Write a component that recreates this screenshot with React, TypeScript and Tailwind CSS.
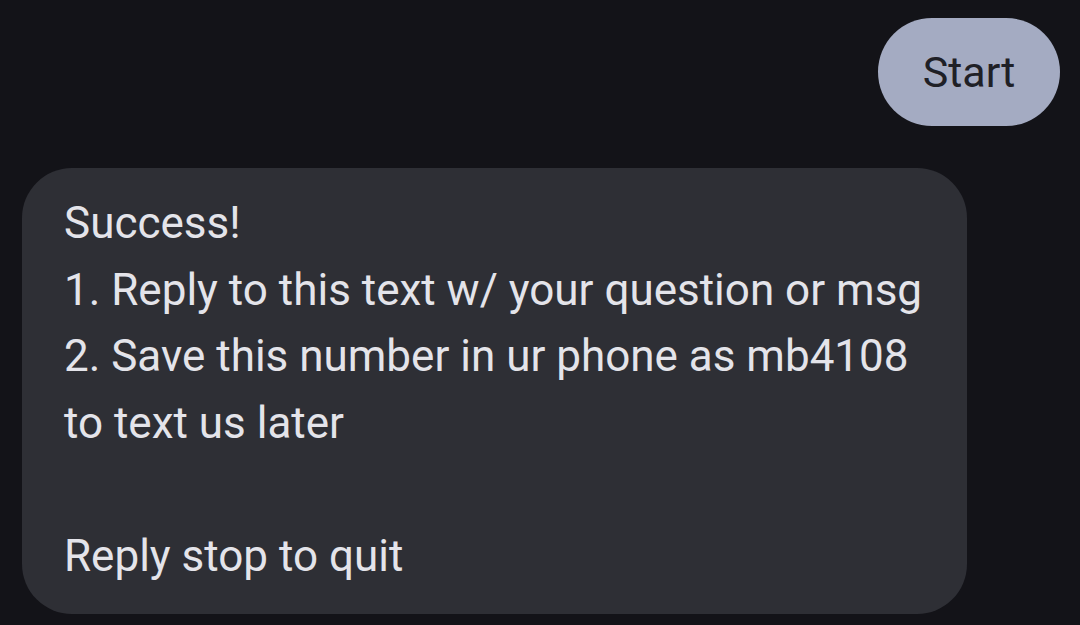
export default function App() {
  const lines = [
    "Success!",
    "1. Reply to this text w/ your question or msg",
    "2. Save this number in ur phone as mb4108",
    "to text us later",
    "",
    "Reply stop to quit",
  ]

  return (
    <div
      className="w-[1080px] h-[625px] bg-[#131318] overflow-hidden"
      style={{ fontFamily: "Roboto, 'Noto Sans', sans-serif" }}
    >
      <div className="flex justify-end pt-[18px] pr-[20px]">
        <div className="h-[108px] w-[182px] rounded-full bg-[#a4abc2] flex items-center justify-center text-[43px] text-[#1f2026]">
          Start
        </div>
      </div>

      <div className="pl-[22px] pt-[42px]">
        <div className="w-[945px] rounded-[50px] bg-[#2e2f35] pl-[42px] pt-[22px] pb-[25px] text-[44px] leading-[66.5px] text-[#e4e4ea]">
          {lines.map((line, i) => (
            <div key={i} className="h-[66.5px] whitespace-nowrap">
              {line}
            </div>
          ))}
        </div>
      </div>
    </div>
  )
}
